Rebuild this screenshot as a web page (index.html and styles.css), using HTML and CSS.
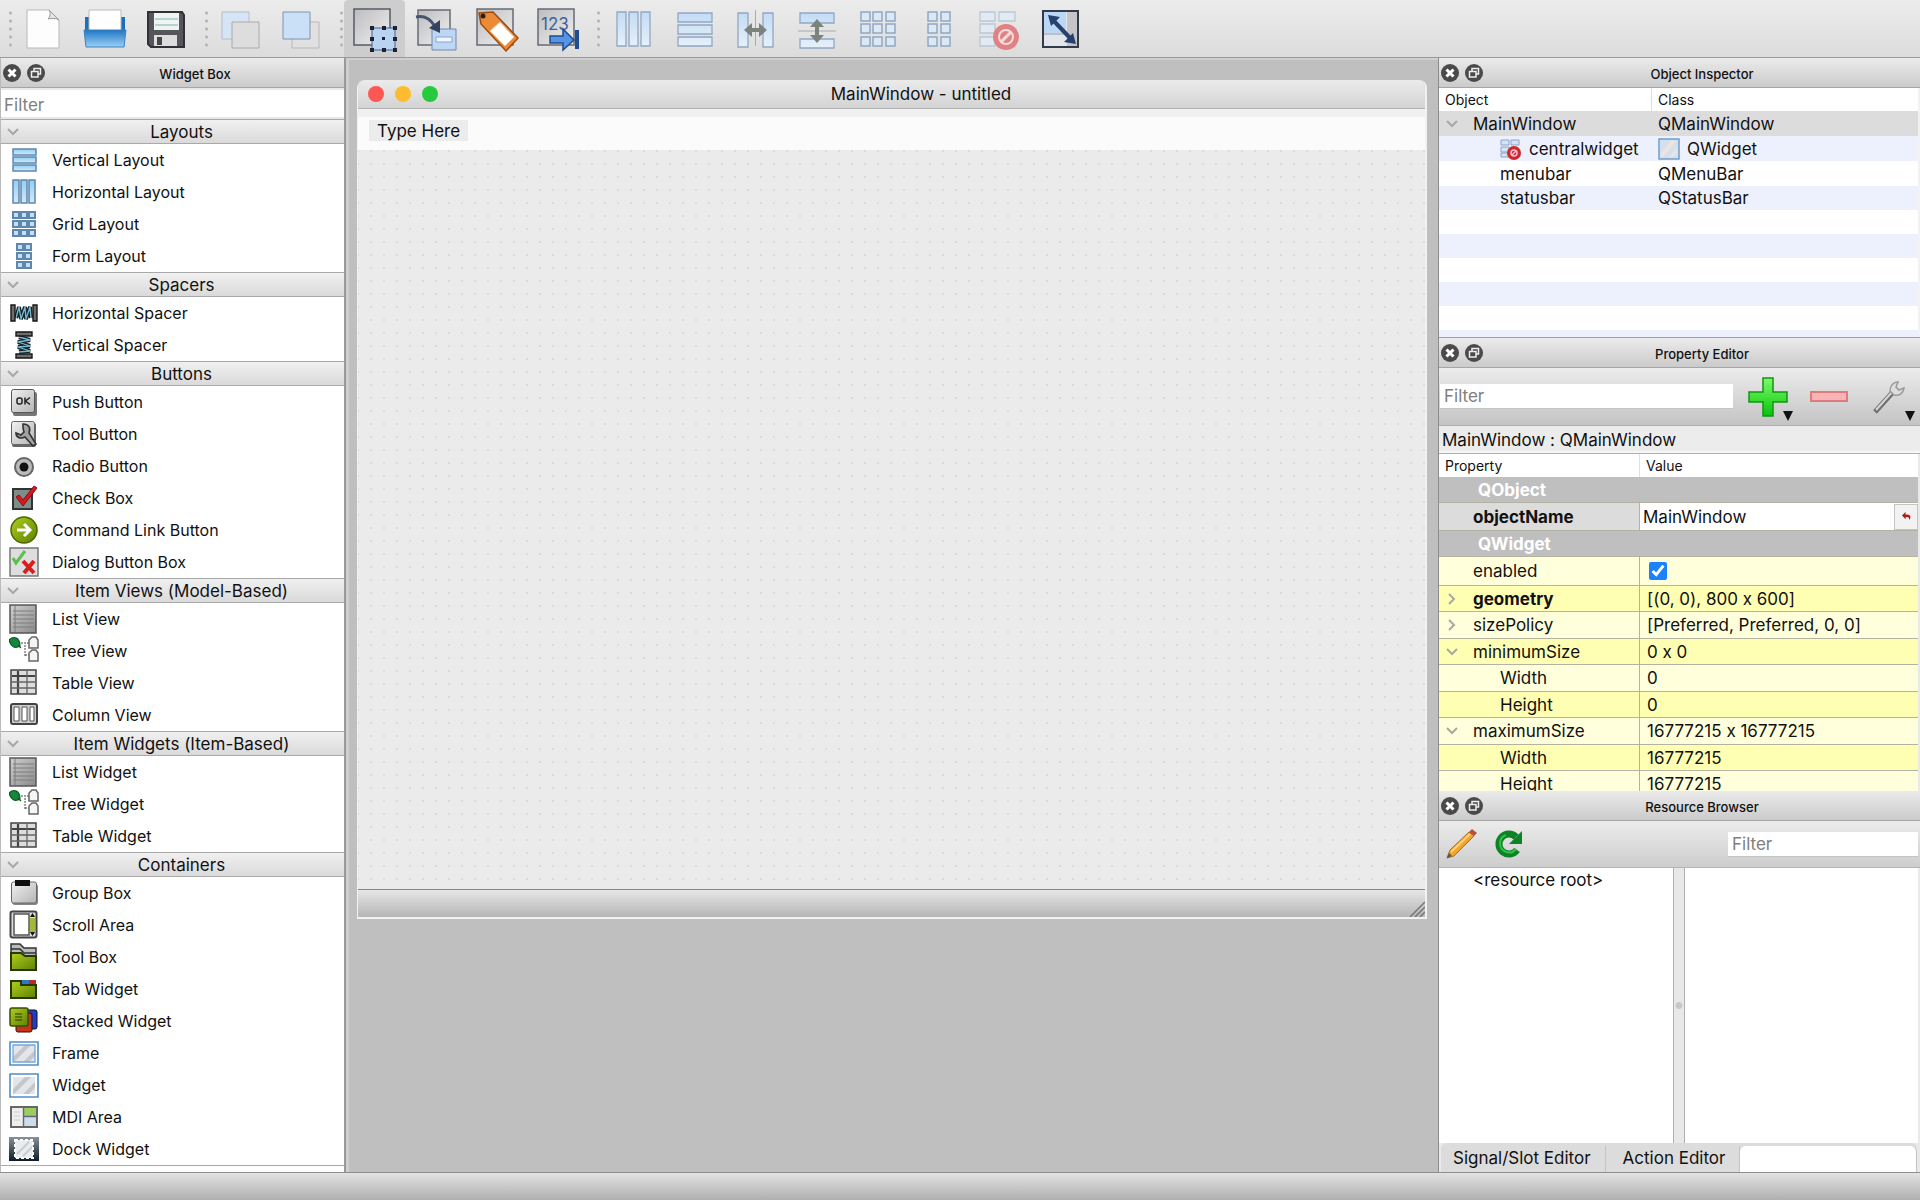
FILE: index.html
```html
<!DOCTYPE html>
<html lang="en">
<head>
<meta charset="utf-8">
<title>MainWindow - untitled</title>
<link rel="stylesheet" href="styles.css">
</head>
<body>
<svg class="defs" aria-hidden="true">
  <defs>
    <linearGradient id="blue" x1="0" y1="0" x2="0" y2="1"><stop offset="0" stop-color="#c3dcf5"/><stop offset="1" stop-color="#e6f0fa"/></linearGradient>
    <linearGradient id="cyan" x1="0" y1="0" x2="0" y2="1"><stop offset="0" stop-color="#8fd0f5"/><stop offset="1" stop-color="#d6e8fa"/></linearGradient>
    <linearGradient id="tray" x1="0" y1="0" x2="0" y2="1"><stop offset="0" stop-color="#1f76c4"/><stop offset="1" stop-color="#9cd0f6"/></linearGradient>
    <linearGradient id="grey" x1="0" y1="0" x2="1" y2="1"><stop offset="0" stop-color="#f2f2f2"/><stop offset="1" stop-color="#b4b4b4"/></linearGradient>
    <linearGradient id="sheet" x1="0" y1="0" x2="1" y2="1"><stop offset="0" stop-color="#cfcfcf"/><stop offset="1" stop-color="#8a8a8a"/></linearGradient>
    <linearGradient id="pane" x1="0" y1="0" x2="1" y2="1"><stop offset="0" stop-color="#bcbcbf"/><stop offset="1" stop-color="#f2f2f2"/></linearGradient>
    <linearGradient id="green" x1="0" y1="0" x2="1" y2="1"><stop offset="0" stop-color="#b0ce20"/><stop offset="1" stop-color="#5d8200"/></linearGradient>
    <linearGradient id="plus" x1="0" y1="0" x2="0" y2="1"><stop offset="0" stop-color="#7dfb6c"/><stop offset="1" stop-color="#08c408"/></linearGradient>
    <linearGradient id="dock" x1="0" y1="0" x2="0" y2="1"><stop offset="0" stop-color="#8a9298"/><stop offset="1" stop-color="#0d1c28"/></linearGradient>
    <symbol id="i-close" viewBox="0 0 20 20"><circle cx="10" cy="10" r="9" fill="#4a4a4a"/><path d="M6.500 6.500l7 7M13.500 6.500l-7 7" stroke="#fff" stroke-width="3"/></symbol>
    <symbol id="i-float" viewBox="0 0 20 20"><circle cx="10" cy="10" r="9" fill="#4a4a4a"/><path d="M8 8V5.500h6.500V11H12M5.500 8.500h6.500v5.500H5.500z" fill="none" stroke="#eee" stroke-width="1.500"/></symbol>
    <symbol id="i-down" viewBox="0 0 12 8"><path d="M1 1l5 5 5-5" fill="none" stroke="#a8a8a0" stroke-width="2"/></symbol>
    <symbol id="i-vlayout" viewBox="0 0 30 30"><g fill="url(#cyan)" stroke="#5f87ad" stroke-width="1.500"><rect x="4" y="4" width="23" height="6"/><rect x="4" y="12" width="23" height="6"/><rect x="4" y="20" width="23" height="6"/></g></symbol>
    <symbol id="i-hlayout" viewBox="0 0 30 30"><g fill="url(#cyan)" stroke="#5f87ad" stroke-width="1.500"><rect x="4" y="3" width="6" height="23"/><rect x="12" y="3" width="6" height="23"/><rect x="20" y="3" width="6" height="23"/></g></symbol>
    <symbol id="i-cells" viewBox="0 0 30 30"><g fill="#c6def3" stroke="#5f87ad" stroke-width="2"><rect x="4" y="3" width="6" height="6"/><rect x="12" y="3" width="6" height="6"/><rect x="20" y="3" width="6" height="6"/><rect x="4" y="12" width="6" height="6"/><rect x="12" y="12" width="6" height="6"/><rect x="20" y="12" width="6" height="6"/><rect x="4" y="21" width="6" height="6"/><rect x="12" y="21" width="6" height="6"/><rect x="20" y="21" width="6" height="6"/></g></symbol>
    <symbol id="i-form" viewBox="0 0 30 30"><g fill="#c6def3" stroke="#5f87ad" stroke-width="2"><rect x="8" y="3" width="6" height="6"/><rect x="16" y="3" width="6" height="6"/><rect x="8" y="12" width="6" height="6"/><rect x="16" y="12" width="6" height="6"/><rect x="8" y="21" width="6" height="6"/><rect x="16" y="21" width="6" height="6"/></g></symbol>
    <symbol id="i-spring" viewBox="0 0 30 30"><path d="M7 20l3-11 2 12 4-12 1 12 4-12 1 11" fill="none" stroke="#17242c" stroke-width="4"/><path d="M7 20l3-11 2 12 4-12 1 12 4-12 1 11" fill="none" stroke="#78b8cc" stroke-width="1.300"/><path d="M2 7h4v16H2zM24 7h4v16h-4z" fill="#6e6e6e" stroke="#161616" stroke-width="1.400"/></symbol>
    <symbol id="i-push" viewBox="0 0 30 30"><rect x="4" y="5" width="24" height="24" rx="2" fill="#777"/><rect x="2.500" y="2.500" width="23" height="23" rx="2" fill="url(#grey)" stroke="#555"/><g fill="none" stroke="#222" stroke-width="1.500"><rect x="8" y="11" width="5" height="6" rx="2"/><path d="M16 10.500v7M21 10.500l-4.500 3.500 4.500 3.500"/></g></symbol>
    <symbol id="i-tool" viewBox="0 0 30 30"><rect x="3" y="4" width="24" height="24" rx="2" fill="#666"/><rect x="2.500" y="2.500" width="23" height="23" rx="2" fill="url(#grey)" stroke="#666"/><path d="M14 5c6 0 8 4 6 9l7 11-3 2-8-9c-4 2-9 1-9-4l5 2 3-3-1-4z" fill="#a2a2a2" stroke="#333" stroke-width="1.600"/></symbol>
    <symbol id="i-radio" viewBox="0 0 30 30"><circle cx="15" cy="16" r="9" fill="#bbb" stroke="#666" stroke-width="2"/><circle cx="15" cy="16" r="4.500" fill="#111"/></symbol>
    <symbol id="i-check" viewBox="0 0 30 30"><path d="M4 6h19v20H4z" fill="#7d8d88" stroke="#333" stroke-width="2"/><path d="M7 14l3-2 4 5L25 3l3 2-14 18z" fill="#d81820" stroke="#8e0d12"/></symbol>
    <symbol id="i-link" viewBox="0 0 30 30"><circle cx="15" cy="15" r="13" fill="url(#green)" stroke="#4c6600" stroke-width="1.500"/><path d="M8 15h12M15 9l6 6-6 6" fill="none" stroke="#fff" stroke-width="3"/></symbol>
    <symbol id="i-dialog" viewBox="0 0 30 30"><path d="M1 1h28v28H1z" fill="#dedede" stroke="#777" stroke-width="1.500"/><path d="M4 11l3 5 9-12" fill="none" stroke="#5cc04c" stroke-width="3"/><path d="M14 14l11 12M25 14L15 26" stroke="#d7201c" stroke-width="4"/></symbol>
    <symbol id="i-list" viewBox="0 0 30 30"><path d="M1 1h26v28H1z" fill="url(#sheet)" stroke="#555" stroke-width="1.500"/><path d="M4 7h21M4 11h21M4 15h21M4 19h21M4 23h21M6 2v26" stroke="#7c7c7c"/></symbol>
    <symbol id="i-tree" viewBox="0 0 30 30"><path d="M0 4c5-5 11-2 11 6-5 3-9 1-11-6zM9 9l3 3" fill="#16863a" stroke="#0b5a22" stroke-width="1.200"/><path d="M12 7h9M16 9v11M16 19h6" fill="none" stroke="#444" stroke-dasharray="2 1"/><path d="M23 1h4l2 3v8h-9V4zM23 14h4l2 3v8h-9v-8z" fill="#f5f5f5" stroke="#666" stroke-width="1.500"/></symbol>
    <symbol id="i-table" viewBox="0 0 30 30"><path d="M2 2h25v24H2z" fill="#ddd" stroke="#444" stroke-width="1.500"/><path d="M3 8h23M9 3v23" stroke="#444" stroke-width="2.200"/><path d="M3 14h23M3 20h23M18 3v23" stroke="#666" stroke-width="1.300"/></symbol>
    <symbol id="i-column" viewBox="0 0 30 30"><rect x="2" y="4" width="26" height="20" rx="2" fill="#ccc" stroke="#444" stroke-width="2"/><path d="M5 7h5v14H5zM13 7h5v14h-5zM21 7h4v14h-4z" fill="#fff" stroke="#555"/></symbol>
    <symbol id="i-group" viewBox="0 0 30 30"><rect x="3" y="6" width="26" height="21" rx="3" fill="#888"/><rect x="2.500" y="4" width="25" height="21" rx="2" fill="url(#grey)" stroke="#666"/><path d="M6 2h15v6H6z" fill="#0e0e0e"/></symbol>
    <symbol id="i-scroll" viewBox="0 0 30 30"><rect x="1.500" y="1.500" width="26" height="26" rx="2" fill="#ddd" stroke="#444" stroke-width="2"/><path d="M5 4h15v21H5z" fill="#fff" stroke="#555" stroke-width="1.500"/><path d="M21 8h5v14h-5z" fill="#a1ba38"/><path d="M21 7l2.500-4L26 7zM21 22l2.500 4 2.500-4z" fill="#111"/></symbol>
    <symbol id="i-toolbox" viewBox="0 0 30 30"><path d="M2 2h9l4 4h12v8H2z" fill="#bbb" stroke="#333" stroke-width="1.500"/><path d="M2 7h9l4 4h12" fill="none" stroke="#333" stroke-width="1.500"/><path d="M2 11h10l4 3h11v14H2z" fill="url(#green)" stroke="#273800" stroke-width="2"/></symbol>
    <symbol id="i-tab" viewBox="0 0 30 30"><path d="M12 6h8v6h-8z" fill="#2e7ac2"/><path d="M20 6h7v6h-7z" fill="#c12a1b"/><path d="M2 7h10v4h15v13H2z" fill="url(#green)" stroke="#273800" stroke-width="2"/></symbol>
    <symbol id="i-stack" viewBox="0 0 30 30"><rect x="11" y="4" width="17" height="19" rx="2" fill="#1b3ed2" stroke="#111"/><rect x="7" y="7" width="16" height="19" rx="2" fill="#c8311c" stroke="#3c0c05"/><rect x="1" y="2" width="18" height="18" rx="2" fill="url(#green)" stroke="#384d00" stroke-width="1.500"/><path d="M6 8h7M6 11h7M6 14h7" stroke="#273800"/></symbol>
    <symbol id="i-widget" viewBox="0 0 30 30"><path d="M1 4h28v23H1z" fill="#fff" stroke="#4d8fcc" stroke-width="1.600"/><path d="M4 7h22v17H4z" fill="#e2e6ea"/><path d="M4 19L16 7h6L5 24H4zM14 24L26 12v6l-6 6z" fill="#c4c6ca"/></symbol>
    <symbol id="i-frame" viewBox="0 0 30 30"><use href="#i-widget"/><path d="M4 7h22v17H4z" fill="none" stroke="#75a9d8" stroke-width="1.300"/></symbol>
    <symbol id="i-pane" viewBox="0 0 22 22"><path d="M1 1h20v20H1z" fill="#d3e1ef" stroke="#6f9fce" stroke-width="1.500"/><path d="M3 15L13 3h5L5 19H3zM11 19l8-9v5l-4 4z" fill="#eee4dc"/></symbol>
    <symbol id="i-mdi" viewBox="0 0 30 30"><path d="M2 5h26v20H2z" fill="#eee" stroke="#666" stroke-width="2"/><path d="M15 6h12v8H15z" fill="#9bcd60"/><path d="M15 15h12v9H15z" fill="#cdddeb"/><path d="M14.500 5v19M15 14.500h12" stroke="#667" stroke-width="1.400"/><path d="M5 10h6M5 14h6M5 18h6" stroke="#ccc"/></symbol>
    <symbol id="i-dock" viewBox="0 0 30 30"><path d="M0 3h30v24H0z" fill="url(#dock)"/><path d="M6 6h18v18H6z" fill="#e8ecef" stroke="#fff" stroke-width="2" stroke-dasharray="3 2"/><path d="M8 20L20 8M14 22l9-9" stroke="#ccc" stroke-width="2"/></symbol>
    <symbol id="i-broken" viewBox="0 0 22 22"><path d="M1 2h8v5H1zM11 2h8v5h-8zM1 9h8v5H1zM1 15h8v4H1z" fill="#d5e3f3" stroke="#8da4cb"/><circle cx="14" cy="15" r="7" fill="#cb2832"/><circle cx="14" cy="15" r="3" fill="none" stroke="#f5c0c2" stroke-width="1.500"/><path d="M12 17l4-4" stroke="#f5c0c2" stroke-width="1.500"/></symbol>
  </defs>
</svg>

<div class="app">
  <header class="toolbar">
    <span class="grip"></span>
    <button class="tool" aria-label="New"><svg viewBox="0 0 44 44"><path d="M5 5h22l10 10v28H5z" fill="#fdfdfd" stroke="#b8b8b8"/><path d="M27 5c2 3 1 7-1 9 4-1 8-1 11 1z" fill="#e6e6e6" stroke="#999"/></svg></button>
    <button class="tool" aria-label="Open"><svg viewBox="0 0 44 44"><path d="M2 12h40v16H2z" fill="#1f6fb8"/><path d="M6 5h32v24H6z" fill="#fff" stroke="#bbb"/><path d="M1 25h42l-2 17H3z" fill="url(#tray)" stroke="#3b82c0"/></svg></button>
    <button class="tool" aria-label="Save"><svg viewBox="0 0 44 44"><path d="M4 7h34l2 3v32H7l-3-3z" fill="#55555c" stroke="#303036" stroke-width="2"/><path d="M10 8h25v17H10z" fill="#eef4f2"/><path d="M11 14h23M11 20h23" stroke="#b9d2d0" stroke-width="2"/><path d="M10 30h23v11H10z" fill="#ddd"/><path d="M13 32h5v8h-5z" fill="#45454b"/></svg></button>
    <span class="grip"></span>
    <button class="tool" aria-label="Send to Back"><svg viewBox="0 0 44 44"><path d="M4 7h27v27H4z" fill="#d5e5f5" stroke="#b3bccb"/><path d="M14 17h27v26H14z" fill="#ddd" stroke="#aaa"/></svg></button>
    <button class="tool" aria-label="Bring to Front"><svg viewBox="0 0 44 44"><path d="M13 17h27v26H13z" fill="#e0e0e0" stroke="#b8b8b8"/><path d="M4 7h27v27H4z" fill="#c9e0f6" stroke="#8292b0"/></svg></button>
    <span class="grip"></span>
    <button class="tool tool-on" aria-label="Edit Widgets"><svg viewBox="0 0 44 44"><path d="M1 4h36v36H1z" fill="url(#pane)" stroke="#555b69" stroke-width="1.500"/><path d="M19 23h23v22H19z" fill="#b9d3f1" stroke="#4a5e88"/><g fill="#1a2238"><path d="M17 21h4v4h-4zM29 21h4v4h-4zM40 21h4v4h-4zM17 32h4v4h-4zM40 32h4v4h-4zM17 43h4v4h-4zM29 43h4v4h-4zM40 43h4v4h-4zM29 32h3v3h-3z"/></g></svg></button>
    <button class="tool" aria-label="Edit Signals/Slots"><svg viewBox="0 0 44 44"><path d="M4 5h32v35H4z" fill="url(#pane)" stroke="#656b77" stroke-width="1.500"/><path d="M18 24h24v21H18z" fill="#bdd6f4" stroke="#7288ac"/><path d="M22 32h16v5H22z" fill="#eef5fc" stroke="#8aa6d0"/><path d="M2 12c10-2 15 3 20 11" fill="none" stroke="#46546f" stroke-width="3"/><path d="M15 23l11 5V15z" fill="#33425e"/></svg></button>
    <button class="tool" aria-label="Edit Buddies"><svg viewBox="0 0 44 44"><path d="M2 4h36v36H2z" fill="url(#pane)" stroke="#656b77" stroke-width="1.500"/><path d="M4 8l14-1 25 26-12 13L6 19z" fill="#ed8a36" stroke="#9c4b10" stroke-width="1.500"/><path d="M15 26l10-9 14 15-9 9z" fill="#fff" stroke="#f3c79b"/><circle cx="8" cy="11" r="2.500" fill="#222"/></svg></button>
    <button class="tool" aria-label="Edit Tab Order"><svg viewBox="0 0 44 44"><path d="M2 4h36v36H2z" fill="url(#pane)" stroke="#656b77" stroke-width="1.500"/><text x="5" y="25" class="glyph">123</text><path d="M14 31h13v-7l11 11-11 10v-7H14z" fill="#5695e6" stroke="#1f4e8e" stroke-width="1.500"/><path d="M39 25h4v19h-4z" fill="#1f4e8e"/></svg></button>
    <span class="grip grip-wide"></span>
    <button class="tool" aria-label="Lay Out Horizontally"><svg viewBox="0 0 44 44" fill="url(#blue)" stroke="#91a7c2" stroke-width="1.300"><path d="M5 7h9v34H5zM17 7h9v34h-9zM29 7h9v34h-9z"/></svg></button>
    <button class="tool" aria-label="Lay Out Vertically"><svg viewBox="0 0 44 44" fill="url(#blue)" stroke="#91a7c2" stroke-width="1.300"><path d="M5 8h34v9H5zM5 20h34v9H5zM5 32h34v9H5z"/></svg></button>
    <button class="tool" aria-label="Lay Out Horizontally in Splitter"><svg viewBox="0 0 44 44"><path d="M4 8h10v34H4zM29 8h10v34H29z" fill="url(#blue)" stroke="#91a7c2" stroke-width="1.300"/><path d="M21.500 5v36" stroke="#aaa"/><path d="M10 25l8-7v5h7v-5l8 7-8 7v-5h-7v5z" fill="#7c837d"/></svg></button>
    <button class="tool" aria-label="Lay Out Vertically in Splitter"><svg viewBox="0 0 44 44"><path d="M5 8h34v10H5zM5 34h34v9H5z" fill="url(#blue)" stroke="#91a7c2" stroke-width="1.300"/><path d="M3 26h38" stroke="#aaa"/><path d="M22 14l7 8h-5v8h5l-7 8-7-8h5v-8h-5z" fill="#7c837d"/></svg></button>
    <button class="tool" aria-label="Lay Out in a Grid"><svg viewBox="0 0 44 44" fill="#dbe9f7" stroke="#91a7c2" stroke-width="1.500"><path d="M5 7h9v9H5zM17 7h9v9h-9zM30 7h9v9h-9zM5 19h9v9H5zM17 19h9v9h-9zM30 19h9v9h-9zM5 32h9v9H5zM17 32h9v9h-9zM30 32h9v9h-9z"/></svg></button>
    <button class="tool" aria-label="Lay Out in a Form Layout"><svg viewBox="0 0 44 44" fill="#dbe9f7" stroke="#91a7c2" stroke-width="1.500"><path d="M11 7h9v9h-9zM24 7h9v9h-9zM11 19h9v9h-9zM24 19h9v9h-9zM11 32h9v9h-9zM24 32h9v9h-9z"/></svg></button>
    <button class="tool" aria-label="Break Layout"><svg viewBox="0 0 44 44"><path d="M2 7h15v9H2zM21 7h16v9H21zM2 19h15v9H2zM2 32h15v9H2z" fill="#e2eaf3" stroke="#bac7d6" stroke-width="1.300"/><circle cx="28" cy="32" r="13" fill="#e28184"/><circle cx="28" cy="32" r="7" fill="none" stroke="#f3dcdc" stroke-width="2"/><path d="M23 37l10-10" stroke="#f3dcdc" stroke-width="3"/></svg></button>
    <button class="tool" aria-label="Adjust Size"><svg viewBox="0 0 44 44"><path d="M4 6h35v36H4z" fill="#e2e5ea" stroke="#333b4b" stroke-width="2"/><path d="M5 7h22v21H5z" fill="#bcd7f5"/><path d="M28 7h10v34H28z" fill="#c5c5c8"/><path d="M5 29h22" stroke="#999"/><path d="M13 14l18 19" stroke="#24426d" stroke-width="4"/><path d="M9 10l12 2-9 9zM37 39l-12-2 9-9z" fill="#24426d"/></svg></button>
  </header>

  <aside class="dock widget-box">
    <div class="dock-title"><button aria-label="Close Widget Box"><svg><use href="#i-close"/></svg></button><button aria-label="Float Widget Box"><svg><use href="#i-float"/></svg></button><h2>Widget Box</h2></div>
    <input class="filter filter-wide" type="text" placeholder="Filter" aria-label="Filter widgets">
    <button class="category"><svg><use href="#i-down"/></svg><span>Layouts</span></button>
    <ul>
      <li><svg><use href="#i-vlayout"/></svg>Vertical Layout</li>
      <li><svg><use href="#i-hlayout"/></svg>Horizontal Layout</li>
      <li><svg><use href="#i-cells"/></svg>Grid Layout</li>
      <li><svg><use href="#i-form"/></svg>Form Layout</li>
    </ul>
    <button class="category"><svg><use href="#i-down"/></svg><span>Spacers</span></button>
    <ul>
      <li><svg><use href="#i-spring"/></svg>Horizontal Spacer</li>
      <li><svg class="upright"><use href="#i-spring"/></svg>Vertical Spacer</li>
    </ul>
    <button class="category"><svg><use href="#i-down"/></svg><span>Buttons</span></button>
    <ul>
      <li><svg><use href="#i-push"/></svg>Push Button</li>
      <li><svg><use href="#i-tool"/></svg>Tool Button</li>
      <li><svg><use href="#i-radio"/></svg>Radio Button</li>
      <li><svg><use href="#i-check"/></svg>Check Box</li>
      <li><svg><use href="#i-link"/></svg>Command Link Button</li>
      <li><svg><use href="#i-dialog"/></svg>Dialog Button Box</li>
    </ul>
    <button class="category"><svg><use href="#i-down"/></svg><span>Item Views (Model-Based)</span></button>
    <ul>
      <li><svg><use href="#i-list"/></svg>List View</li>
      <li><svg><use href="#i-tree"/></svg>Tree View</li>
      <li><svg><use href="#i-table"/></svg>Table View</li>
      <li><svg><use href="#i-column"/></svg>Column View</li>
    </ul>
    <button class="category"><svg><use href="#i-down"/></svg><span>Item Widgets (Item-Based)</span></button>
    <ul>
      <li><svg><use href="#i-list"/></svg>List Widget</li>
      <li><svg><use href="#i-tree"/></svg>Tree Widget</li>
      <li><svg><use href="#i-table"/></svg>Table Widget</li>
    </ul>
    <button class="category"><svg><use href="#i-down"/></svg><span>Containers</span></button>
    <ul>
      <li><svg><use href="#i-group"/></svg>Group Box</li>
      <li><svg><use href="#i-scroll"/></svg>Scroll Area</li>
      <li><svg><use href="#i-toolbox"/></svg>Tool Box</li>
      <li><svg><use href="#i-tab"/></svg>Tab Widget</li>
      <li><svg><use href="#i-stack"/></svg>Stacked Widget</li>
      <li><svg><use href="#i-frame"/></svg>Frame</li>
      <li><svg><use href="#i-widget"/></svg>Widget</li>
      <li><svg><use href="#i-mdi"/></svg>MDI Area</li>
      <li><svg><use href="#i-dock"/></svg>Dock Widget</li>
    </ul>
  </aside>

  <main class="workspace">
    <section class="window">
      <div class="window-title">
        <button class="light red" aria-label="Close"></button>
        <button class="light amber" aria-label="Minimize"></button>
        <button class="light green" aria-label="Zoom"></button>
        <h1>MainWindow - untitled</h1>
      </div>
      <div class="menubar"><button>Type Here</button></div>
      <div class="form-canvas"></div>
      <div class="window-status"><svg viewBox="0 0 16 16"><path d="M1 16L16 1M6 16L16 6M11 16l5-5" stroke="#777" stroke-width="1.500"/></svg></div>
    </section>
  </main>

  <div class="right">
    <section class="dock inspector">
      <div class="dock-title"><button aria-label="Close Object Inspector"><svg><use href="#i-close"/></svg></button><button aria-label="Float Object Inspector"><svg><use href="#i-float"/></svg></button><h2>Object Inspector</h2></div>
      <table>
        <thead><tr><th class="col-object">Object</th><th>Class</th></tr></thead>
        <tbody>
          <tr class="current"><td><span class="cell"><svg class="twist"><use href="#i-down"/></svg>MainWindow</span></td><td>QMainWindow</td></tr>
          <tr><td><span class="cell child"><svg class="mini"><use href="#i-broken"/></svg>centralwidget</span></td><td><span class="cell"><svg class="mini"><use href="#i-pane"/></svg>QWidget</span></td></tr>
          <tr><td><span class="cell child">menubar</span></td><td>QMenuBar</td></tr>
          <tr><td><span class="cell child">statusbar</span></td><td>QStatusBar</td></tr>
          <tr><td></td><td></td></tr>
          <tr><td></td><td></td></tr>
          <tr><td></td><td></td></tr>
          <tr><td></td><td></td></tr>
          <tr><td></td><td></td></tr>
          <tr><td></td><td></td></tr>
        </tbody>
      </table>
    </section>

    <section class="dock properties">
      <div class="dock-title"><button aria-label="Close Property Editor"><svg><use href="#i-close"/></svg></button><button aria-label="Float Property Editor"><svg><use href="#i-float"/></svg></button><h2>Property Editor</h2></div>
      <div class="prop-tools">
        <input class="filter" type="text" placeholder="Filter" aria-label="Filter properties">
        <button aria-label="Add property"><svg viewBox="0 0 46 46"><path d="M18 4h10v14h14v10H28v14H18V28H4V18h14z" fill="url(#plus)" stroke="#129512" stroke-width="1.500"/><path d="M38 37h10l-5 10z" fill="#111"/></svg></button>
        <button aria-label="Remove property"><svg viewBox="0 0 46 46"><path d="M5 18h36v9H5z" fill="#f8b4b4" stroke="#de7c7c" stroke-width="2"/></svg></button>
        <button aria-label="Configure"><svg viewBox="0 0 46 46"><path d="M8 38L26 18" stroke="#707070" stroke-width="5"/><path d="M9 36L26 17" stroke="#d6d6d6" stroke-width="2"/><path d="M23 17c0-5 3-9 8-9l-2 5 3 3 5-2c-1 6-5 8-10 7z" fill="#ddd" stroke="#999" stroke-width="1.500"/><path d="M38 37h10l-5 10z" fill="#111"/></svg></button>
      </div>
      <p class="object-name">MainWindow : QMainWindow</p>
      <div class="prop-scroll">
        <table>
          <thead><tr><th class="col-name">Property</th><th>Value</th></tr></thead>
          <tbody>
            <tr class="group"><th colspan="2">QObject</th></tr>
            <tr class="edited"><td><label class="cell bold" for="object-name">objectName</label></td><td><span class="edit"><input id="object-name" type="text" value="MainWindow"><button aria-label="Reset"><svg viewBox="0 0 10 10"><path d="M0 4l4-4v3c5-1 7 2 4 6 0-3-1-4-4-3v2z" fill="#b81c14"/></svg></button></span></td></tr>
            <tr class="group"><th colspan="2">QWidget</th></tr>
            <tr class="pale tall"><td><label class="cell" for="enabled">enabled</label></td><td><input id="enabled" type="checkbox" checked></td></tr>
            <tr class="deep"><td><span class="cell bold"><svg class="twist shut"><use href="#i-down"/></svg>geometry</span></td><td>[(0, 0), 800 x 600]</td></tr>
            <tr class="pale"><td><span class="cell"><svg class="twist shut"><use href="#i-down"/></svg>sizePolicy</span></td><td>[Preferred, Preferred, 0, 0]</td></tr>
            <tr class="deep"><td><span class="cell"><svg class="twist"><use href="#i-down"/></svg>minimumSize</span></td><td>0 x 0</td></tr>
            <tr class="pale"><td><span class="cell child">Width</span></td><td>0</td></tr>
            <tr class="deep"><td><span class="cell child">Height</span></td><td>0</td></tr>
            <tr class="pale"><td><span class="cell"><svg class="twist"><use href="#i-down"/></svg>maximumSize</span></td><td>16777215 x 16777215</td></tr>
            <tr class="deep"><td><span class="cell child">Width</span></td><td>16777215</td></tr>
            <tr class="pale"><td><span class="cell child">Height</span></td><td>16777215</td></tr>
          </tbody>
        </table>
      </div>
    </section>

    <section class="dock resources">
      <div class="dock-title"><button aria-label="Close Resource Browser"><svg><use href="#i-close"/></svg></button><button aria-label="Float Resource Browser"><svg><use href="#i-float"/></svg></button><h2>Resource Browser</h2></div>
      <div class="res-tools">
        <button aria-label="Edit Resources"><svg viewBox="0 0 32 32"><path d="M2 30l3-8L24 4l5 4L9 28z" fill="#f2a52d" stroke="#ad6d12"/><path d="M6 24L25 6" stroke="#fbd37a" stroke-width="2"/><path d="M24 4l3-3 5 4-3 3z" fill="#b9503d"/><path d="M2 30l2-5 3 3z" fill="#555"/></svg></button>
        <button aria-label="Reload"><svg viewBox="0 0 32 32"><path d="M24 22a10 10 0 1 1-1-13" fill="none" stroke="#0a8424" stroke-width="7"/><path d="M23 21a9 9 0 0 1-16-6 9 9 0 0 1 6-8" fill="none" stroke="#37bd4a" stroke-width="2"/><path d="M29 3v13H16z" fill="#0a8424"/></svg></button>
        <input class="filter" type="text" placeholder="Filter" aria-label="Filter resources">
      </div>
      <div class="res-body">
        <div class="res-tree">&lt;resource root&gt;</div>
        <div class="splitter"></div>
        <div class="res-view"></div>
      </div>
      <nav class="tabs"><button>Signal/Slot Editor</button><button>Action Editor</button><button class="active" aria-label="Resource Browser"></button></nav>
    </section>
  </div>

  <footer class="statusbar"></footer>
</div>
</body>
</html>
```
FILE: styles.css
```css
* { box-sizing: border-box; }
body {
  margin: 0;
  font: 17px/20px Inter, "Liberation Sans", sans-serif;
  font-feature-settings: "calt" 0;
  color: #111;
  background: #bfbfbf;
}
button, input { font: inherit; font-feature-settings: inherit; color: inherit; margin: 0; padding: 0; border: 0; border-radius: 0; background: none; }
h1, h2, p, ul { margin: 0; padding: 0; list-style: none; }
svg { display: block; flex: none; }
.defs { position: absolute; width: 0; height: 0; }

.app {
  display: grid;
  grid-template-columns: 346px minmax(0, 1fr) 482px;
  grid-template-rows: 58px minmax(0, 1fr) 28px;
  height: 100vh;
  min-height: 900px;
}

/* main toolbar */
.toolbar {
  grid-column: 1 / -1;
  display: flex;
  background: linear-gradient(#ececec, #dcdcdc);
  border-bottom: 1px solid #999;
}
.grip {
  width: 13px;
  margin: 9px 0;
  background: radial-gradient(circle, #b4b4b4 1px, transparent 2px) 8px 0 / 5px 8px repeat-y;
}
.grip-wide { width: 15px; }
.tool { display: flex; width: 61px; align-items: center; justify-content: center; padding-bottom: 4px; }
.tool svg { width: 44px; height: 44px; overflow: visible; }
.tool-on { background: #cdcdcd; border-radius: 4px 4px 0 0; }
.glyph { font-size: 17px; fill: #3f639c; stroke: none; }

/* docks */
.dock { display: flex; flex-direction: column; min-height: 0; overflow: hidden; }
.dock-title {
  display: flex;
  flex: none;
  align-items: center;
  gap: 4px;
  height: 30px;
  padding: 0 4px 0 1px;
  background: linear-gradient(#ebebeb, #cbcbcb);
  border-bottom: 1px solid #a6a6a6;
}
.dock-title svg { width: 20px; height: 20px; }
.dock-title h2 { flex: 1; padding-top: 2px; text-align: center; font-size: 13px; font-weight: 500; }
.filter { height: 25px; padding: 0 4px; background: #fff; border-bottom: 1px solid #c4c4c4; }
.filter::placeholder { color: #808080; opacity: 1; }

/* widget box */
.widget-box { background: #fff; border-right: 2px solid #999; border-left: 1px solid #bbb; }
.widget-box .filter-wide { flex: none; height: 31px; padding: 2px 3px 0; border: solid #e8e8e8; border-width: 2px 0; }
.category {
  display: flex;
  flex: none;
  align-items: center;
  height: 25px;
  padding: 0 0 0 6px;
  background: linear-gradient(#f0f0f0, #dadada);
  border: solid #a9a9a9;
  border-width: 1px 0;
}
.category svg { width: 12px; height: 8px; }
.category span { flex: 1; text-align: center; }
.widget-box li { display: flex; align-items: center; gap: 13px; height: 32px; padding-left: 8px; font-size: 16px; }
.widget-box li svg { width: 30px; height: 30px; }
.upright { transform: rotate(90deg); }
.widget-box ul:last-child { border-bottom: 1px solid #a9a9a9; }

/* form being edited */
.workspace { padding: 22px 11px 0 11px; overflow: hidden; box-shadow: inset 3px 2px #cfcfcf; }
.window { border-radius: 8px 8px 0 0; overflow: hidden; border: solid #f2f2f2; border-width: 0 2px 2px 1px; }
.window-title {
  display: flex;
  align-items: center;
  gap: 11px;
  height: 29px;
  padding-left: 10px;
  background: linear-gradient(#ebebeb, #d3d3d3);
  border-bottom: 1px solid #b4b4b4;
}
.window-title h1 { flex: 1; padding-right: 32px; text-align: center; font-size: 17px; font-weight: 400; }
.light { width: 16px; height: 16px; border-radius: 50%; }
.red { background: #fc5753; }
.amber { background: #fdbc2e; }
.green { background: #27c93f; }
.menubar { padding: 11px 11px 9px; background: linear-gradient(#f0f0f0 8px, #fbfbfb 8px); }
.menubar button { display: block; height: 21px; padding: 0 8px; background: #ececec; }
.form-canvas {
  --dot: radial-gradient(circle at 1px 1px, #dbdbdb 1px, transparent 1px);
  height: 739px;
  background: #ebebeb var(--dot) 12px 13px / 13px 13px;
}
.window-status {
  display: flex;
  align-items: flex-end;
  justify-content: flex-end;
  height: 28px;
  background: linear-gradient(#e6e6e6, #b6b6b6);
  border-top: 1px solid #858585;
}
.window-status svg { width: 16px; height: 16px; }

/* right column */
.right {
  display: grid;
  grid-template-rows: 280fr 453fr 381fr;
  min-height: 0;
  background: #e9e9e9;
  border-left: 1px solid #8c8c8c;
}
table { width: 100%; border-collapse: separate; border-spacing: 0; table-layout: fixed; }
th, td { padding: 0; text-align: left; font-weight: 400; white-space: nowrap; }
thead th { height: 23px; padding-left: 6px; font-size: 14px; background: #fff; }
thead th + th { border-left: 1px solid #e0e0e0; }
.cell { display: flex; align-items: center; gap: 7px; padding-left: 34px; }
.cell .twist { width: 12px; height: 8px; margin: 0 8px 0 -27px; }
.cell .mini { width: 22px; height: 22px; }
.shut { transform: rotate(-90deg); }
.child { padding-left: 61px; }
.bold { font-weight: 700; }

.inspector { padding-right: 2px; background: #f2f2f2; border-bottom: 1px solid #a0a0a0; }
.inspector .dock-title { margin-right: -2px; }
.col-object { width: 212px; }
.inspector tbody tr { height: 24px; background: #fff; }
.inspector tbody tr:nth-child(-n+3) { height: 25px; }
.inspector tbody tr:nth-child(even) { background: #edf1fd; }
.inspector tbody tr.current { background: #dcdcdc; }
.inspector td + td { padding-left: 7px; }
.inspector td + td .cell { padding-left: 0; }

.prop-tools {
  display: flex;
  flex: none;
  align-items: center;
  height: 57px;
  background: linear-gradient(#ececec, #c4c4c4);
}
.prop-tools .filter { flex: 1; min-width: 0; margin: 0 12px 0 1px; }
.prop-tools button { width: 46px; margin-right: 15px; }
.prop-tools button:last-child { margin-right: 7px; }
.prop-tools svg { width: 46px; height: 46px; overflow: visible; }
.object-name { flex: none; height: 29px; padding: 4px 3px; background: #ececec; border: solid #b0b0b0; border-width: 1px 0 1px; box-shadow: inset 0 -2px #f6f6f6; }
.prop-scroll { overflow: hidden; flex: 1; min-height: 0; padding-right: 2px; }
.col-name { width: 200px; }
.prop-scroll tbody td, .group th { border-bottom: 1px solid #b3b3a0; }
.prop-scroll td + td { padding-left: 7px; border-left: 1px solid #b3b3a0; }
.group { height: 26px; background: #bfbfbf; }
.group th { padding-left: 39px; font-weight: 700; color: #fff; }
.edited { height: 28px; background: #dcdcdc; }
.prop-scroll .edited td + td { padding: 0; background: #fff; }
.edit { display: flex; height: 26px; }
.edit input { flex: 1; min-width: 0; padding: 0 3px; }
.edit button { display: flex; align-items: center; justify-content: center; width: 24px; background: #f2f2f2; border: 1px solid #c4c4c4; }
.edit svg { width: 9px; height: 9px; }
.pale { height: 27px; background: #ffffdc; }
.deep { height: 26px; background: #ffffb3; }
.tall { height: 29px; }
.prop-scroll input[type="checkbox"] { display: block; width: 18px; height: 18px; margin-left: 2px; accent-color: #1a82fb; }

.res-tools {
  display: flex;
  flex: none;
  align-items: center;
  gap: 16px;
  height: 47px;
  padding: 0 2px 0 6px;
  background: linear-gradient(#ececec, #cdcdcd);
  border-bottom: 1px solid #b4b4b4;
}
.res-tools svg { width: 32px; height: 32px; }
.res-tools .filter { width: 190px; margin-left: auto; }
.res-body { display: grid; grid-template-columns: 234px 12px 1fr; flex: 1; min-height: 0; padding-right: 2px; }
.res-tree { padding: 2px 0 0 34px; background: #fff; }
.res-view { background: #fff; }
.splitter { background: radial-gradient(circle, #c8c8c8 3px, transparent 4px) #e8e8e8; border: solid #b0b0b0; border-width: 0 1px; }
.tabs {
  display: flex;
  flex: none;
  height: 29px;
  margin: 0 3px 0 2px;
  padding-top: 3px;
  background: #dcdcdc;
  border-radius: 6px 6px 0 0;
}
.tabs button { padding: 0 14px 2px 12px; border-right: 1px solid #c4c4c4; }
.tabs button:nth-child(2) { padding-left: 17px; }
.tabs .active { flex: 1; background: #fff; border-radius: 6px 6px 0 0; }

.statusbar { grid-column: 1 / -1; background: linear-gradient(#e2e2e2, #b0b0b0); border-top: 1px solid #8f8f8f; }
```
